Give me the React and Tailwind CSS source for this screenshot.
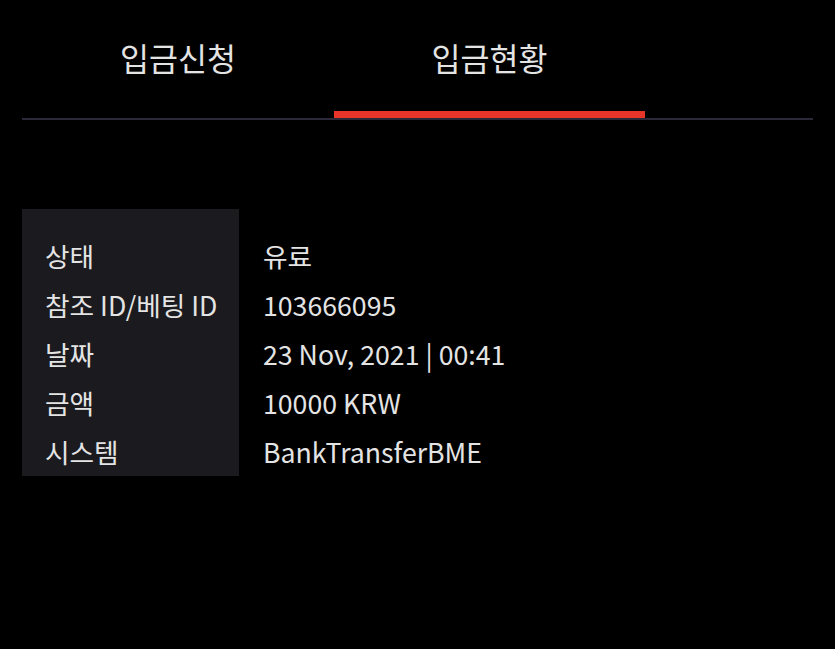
import React from 'react';

const rows = [
  ['상태', '유료'],
  ['참조 ID/베팅 ID', '103666095'],
  ['날짜', '23 Nov, 2021 | 00:41'],
  ['금액', '10000 KRW'],
  ['시스템', 'BankTransferBME'],
];

const font = { fontFamily: '"Noto Sans CJK KR", "Noto Sans", sans-serif' };

export default function App() {
  return (
    <div className="min-h-[649px] w-[835px] bg-black text-[#e4e4e4]" style={font}>
      <div className="px-[22px]">
        {/* tabs */}
        <div className="flex border-b-2 border-[#2a2937]">
          <div className="w-[312px] h-[118px] pt-[34px] text-center text-[31.5px] leading-[46px]">
            입금신청
          </div>
          <div className="w-[311px] h-[118px] pt-[34px] text-center text-[31.5px] leading-[46px] border-b-[7px] border-[#e8352a]">
            입금현황
          </div>
        </div>

        {/* details */}
        <div className="mt-[89px] flex text-[26.7px]">
          <div className="w-[217px] h-[267px] bg-[#1a1a1f] pl-[23px] pt-[23px]">
            {rows.map(([label]) => (
              <div key={label} className="h-[49px] flex items-center whitespace-nowrap">{label}</div>
            ))}
          </div>
          <div className="pl-[24px] pt-[23px]">
            {rows.map(([label, value]) => (
              <div key={label} className="h-[49px] flex items-center whitespace-nowrap">{value}</div>
            ))}
          </div>
        </div>
      </div>
    </div>
  );
}
